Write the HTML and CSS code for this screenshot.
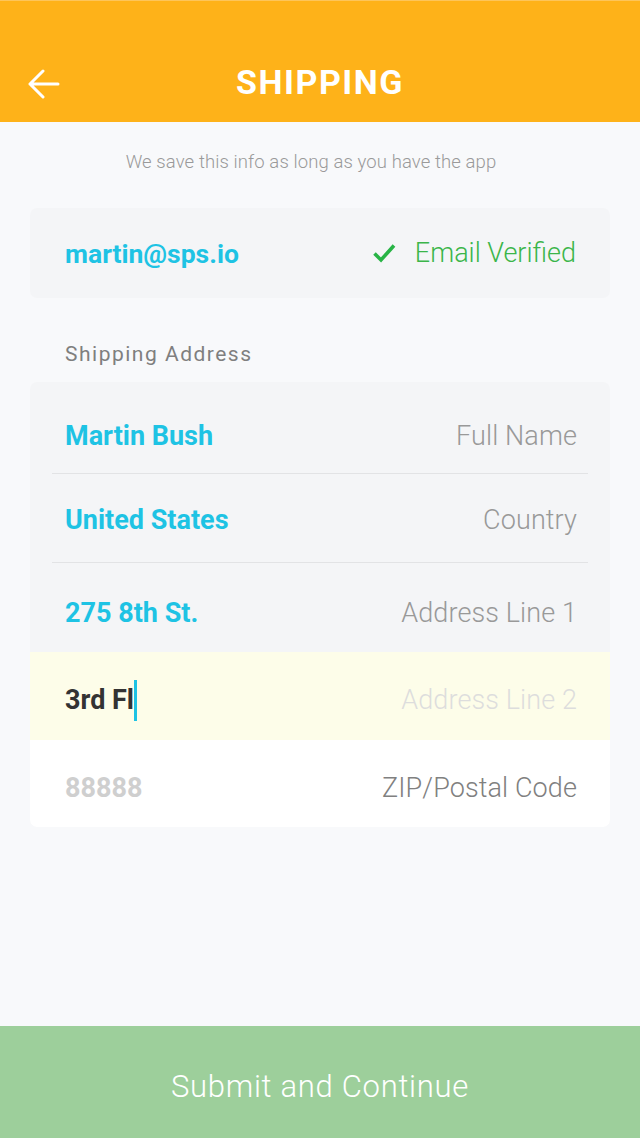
FILE: index.html
```html
<!DOCTYPE html>
<html>
<head>
<meta charset="utf-8">
<link rel="stylesheet" href="styles.css">
</head>
<body>
<div class="app">
  <header class="topbar">
    <button class="back" aria-label="Back">
      <svg width="32" height="30" viewBox="0 0 32 30"><path d="M30 15H2M15 2L2 15L15 28" fill="none" stroke="#fff" stroke-width="3" stroke-linecap="round" stroke-linejoin="round"/></svg>
    </button>
    <h1 class="title">SHIPPING</h1>
  </header>
  <main class="content">
    <p class="note">We save this info as long as you have the app</p>
    <div class="card email-card">
      <span class="email">martin@sps.io</span>
      <span class="verified">
        <svg width="23" height="19" viewBox="0 0 23 19"><path d="M1.5 9.5L8 16L21 1.5" fill="none" stroke="#28b446" stroke-width="3.6" stroke-linejoin="miter"/></svg>
        Email Verified
      </span>
    </div>
    <div class="section-label">Shipping Address</div>
    <div class="card address-card">
      <div class="row r1 divided"><span class="value">Martin Bush</span><span class="label">Full Name</span></div>
      <div class="row r2 divided"><span class="value">United States</span><span class="label">Country</span></div>
      <div class="row r3"><span class="value">275 8th St.</span><span class="label">Address Line 1</span></div>
      <div class="row r4 active"><span class="value typing">3rd Fl<span class="caret"></span></span><span class="label faint">Address Line 2</span></div>
      <div class="row r5 blank"><span class="value placeholder">88888</span><span class="label dark">ZIP/Postal Code</span></div>
    </div>
  </main>
  <button class="submit">Submit and Continue</button>
</div>
</body>
</html>
```
FILE: styles.css
```css
* { box-sizing: border-box; }
html, body { margin: 0; padding: 0; }
body {
  font-family: Roboto, "Liberation Sans", sans-serif;
  background: #f8f9fb;
  width: 640px;
  height: 1138px;
}
.app {
  display: flex;
  flex-direction: column;
  height: 1138px;
}
.topbar {
  height: 122px;
  flex: none;
  background: #feb219;
  display: flex;
  align-items: center;
  justify-content: center;
  position: relative;
  padding-top: 41px;
  border-top: 1px solid #fdc55a;
}
.back {
  position: absolute;
  left: 28px;
  top: 68px;
  background: none;
  border: 0;
  padding: 0;
  width: 32px;
  height: 30px;
  display: flex;
}
.title {
  margin: 0;
  color: #fff;
  font-size: 34px;
  font-weight: 700;
  letter-spacing: 1.5px;
}
.content {
  flex: 1;
  padding: 0 30px;
  display: flex;
  flex-direction: column;
}
.note {
  margin: 28px 0 0;
  padding-right: 18px;
  text-align: center;
  color: #9a9a9a;
  font-size: 18.5px;
  font-weight: 300;
  letter-spacing: 0.1px;
  line-height: 25px;
}
.card {
  background: #f4f5f7;
  border-radius: 7px;
}
.email-card {
  margin-top: 33px;
  height: 90px;
  display: flex;
  align-items: center;
  justify-content: space-between;
  padding: 0 34px 0 35px;
}
.email {
  color: #1ec3e4;
  font-size: 26.5px;
  font-weight: 700;
}
.verified {
  color: #3bb54a;
  font-size: 27px;
  font-weight: 300;
  display: flex;
  align-items: center;
  gap: 19px;
}
.section-label {
  margin: 44px 0 0 35px;
  color: #7f7f7f;
  font-size: 21px;
  font-weight: 400;
  letter-spacing: 1.5px;
  line-height: 24px;
}
.address-card {
  margin-top: 16px;
  overflow: hidden;
}
.row {
  display: flex;
  align-items: center;
  justify-content: space-between;
  padding: 0 33px 0 35px;
  position: relative;
}
.r1 { height: 92px; padding-top: 16px; }
.r2 { height: 89px; padding-top: 2px; }
.r3 { height: 89px; padding-top: 11px; }
.r4 { height: 88px; padding-top: 8px; }
.r5 { height: 87px; padding-top: 8px; }
.row.divided::after {
  content: "";
  position: absolute;
  left: 22px;
  right: 22px;
  bottom: 0;
  height: 1px;
  background: #e2e3e5;
}
.row.active { background: #fdfde9; }
.row.blank { background: #fff; }
.value {
  color: #1ec3e4;
  font-size: 27px;
  font-weight: 700;
  display: flex;
  align-items: center;
}
.typing { color: #333; }
.caret {
  display: inline-block;
  width: 3px;
  height: 41px;
  background: #1ec3e4;
}
.placeholder { color: #cfcfcf; }
.label {
  color: #999;
  font-size: 27px;
  font-weight: 300;
  letter-spacing: 0.1px;
}
.label.faint { color: #dddddd; }
.label.dark { color: #808080; }
.submit {
  height: 112px;
  flex: none;
  border: 0;
  background: #9dcf9b;
  color: #fff;
  font-family: Roboto, "Liberation Sans", sans-serif;
  font-size: 31px;
  font-weight: 300;
  letter-spacing: 0.7px;
  padding: 8px 0 0;
  width: 100%;
}
```
